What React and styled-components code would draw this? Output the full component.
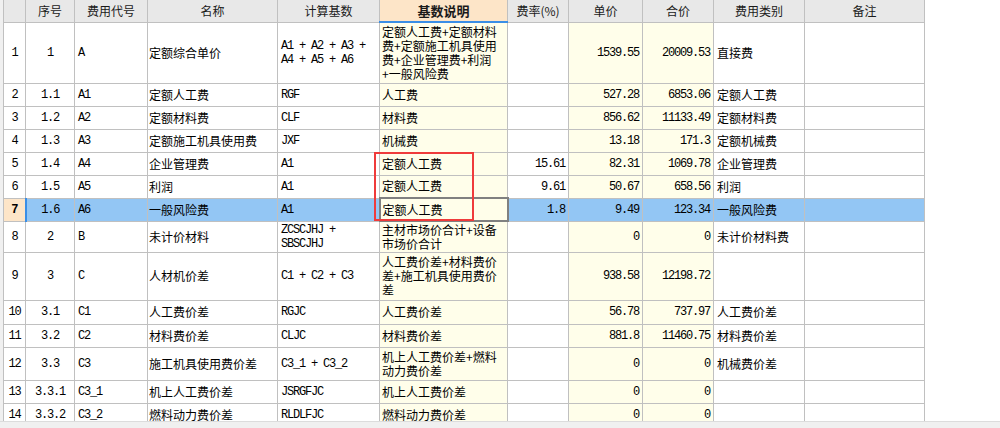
import React from "react";
import styled, { createGlobalStyle, css } from "styled-components";

const GlobalStyle = createGlobalStyle`
  html, body {
    margin: 0;
    padding: 0;
    background: #ffffff;
  }
  body {
    font-family: "Noto Sans CJK SC", "Noto Sans", sans-serif;
  }
`;

const IVORY = "#fffeea";
const SELECTED = "#93c6f4";
const PEACH = "#fde5c8";
const ACCENT = "#3a8ee6";

// column setup: width, alignment, monospace text, ivory background
const columns = [
  { key: "num", title: "", width: 22, align: "center", mono: true },
  { key: "seq", title: "序号", width: 49, align: "center", mono: true },
  { key: "code", title: "费用代号", width: 73, mono: true },
  { key: "name", title: "名称", width: 130, pad: 1 },
  { key: "base", title: "计算基数", width: 102, mono: true },
  { key: "desc", title: "基数说明", width: 128, ivory: true, pad: 2, active: true },
  { key: "rate", title: "费率(%)", width: 61, align: "right", mono: true },
  { key: "price", title: "单价", width: 74, align: "right", mono: true, ivory: true },
  { key: "total", title: "合价", width: 71, align: "right", mono: true, ivory: true },
  { key: "kind", title: "费用类别", width: 91 },
  { key: "note", title: "备注", width: 120 },
];

const rows = [
  { h: 61, num: 1, seq: "1", code: "A", name: "定额综合单价", base: "A1 + A2 + A3 +\nA4 + A5 + A6", desc: "定额人工费+定额材料\n费+定额施工机具使用\n费+企业管理费+利润\n+一般风险费", price: "1539.55", total: "20009.53", kind: "直接费" },
  { h: 23, num: 2, seq: "1.1", code: "A1", name: "定额人工费", base: "RGF", desc: "人工费", price: "527.28", total: "6853.06", kind: "定额人工费" },
  { h: 23, num: 3, seq: "1.2", code: "A2", name: "定额材料费", base: "CLF", desc: "材料费", price: "856.62", total: "11133.49", kind: "定额材料费" },
  { h: 23, num: 4, seq: "1.3", code: "A3", name: "定额施工机具使用费", base: "JXF", desc: "机械费", price: "13.18", total: "171.3", kind: "定额机械费" },
  { h: 23, num: 5, seq: "1.4", code: "A4", name: "企业管理费", base: "A1", desc: "定额人工费", rate: "15.61", price: "82.31", total: "1069.78", kind: "企业管理费" },
  { h: 23, num: 6, seq: "1.5", code: "A5", name: "利润", base: "A1", desc: "定额人工费", rate: "9.61", price: "50.67", total: "658.56", kind: "利润" },
  { h: 23, num: 7, seq: "1.6", code: "A6", name: "一般风险费", base: "A1", desc: "定额人工费", rate: "1.8", price: "9.49", total: "123.34", kind: "一般风险费", selected: true },
  { h: 31, num: 8, seq: "2", code: "B", name: "未计价材料", base: "ZCSCJHJ +\nSBSCJHJ", desc: "主材市场价合计+设备\n市场价合计", price: "0", total: "0", kind: "未计价材料费" },
  { h: 48, num: 9, seq: "3", code: "C", name: "人材机价差", base: "C1 + C2 + C3", desc: "人工费价差+材料费价\n差+施工机具使用费价\n差", price: "938.58", total: "12198.72" },
  { h: 24, num: 10, seq: "3.1", code: "C1", name: "人工费价差", base: "RGJC", desc: "人工费价差", price: "56.78", total: "737.97", kind: "人工费价差" },
  { h: 23, num: 11, seq: "3.2", code: "C2", name: "材料费价差", base: "CLJC", desc: "材料费价差", price: "881.8", total: "11460.75", kind: "材料费价差" },
  { h: 33, num: 12, seq: "3.3", code: "C3", name: "施工机具使用费价差", base: "C3_1 + C3_2", desc: "机上人工费价差+燃料\n动力费价差", price: "0", total: "0", kind: "机械费价差" },
  { h: 23, num: 13, seq: "3.3.1", code: "C3_1", name: "机上人工费价差", base: "JSRGFJC", desc: "机上人工费价差", price: "0", total: "0" },
  { h: 23, num: 14, seq: "3.3.2", code: "C3_2", name: "燃料动力费价差", base: "RLDLFJC", desc: "燃料动力费价差", price: "0", total: "0" },
];

const Page = styled.div`
  position: relative;
  width: 1000px;
  height: 428px;
  overflow: hidden;
  display: flex;
  flex-direction: column;
  background: #ffffff;
`;

const GridArea = styled.div`
  height: 421px;
  flex: none;
  overflow: hidden;
  border-left: 3px solid #f0f0f0;
`;

const HScroll = styled.div`
  flex: 1;
  background: #f0f0f0;
  border-top: 1px solid #dcdcdc;
`;

const Table = styled.table`
  border-collapse: collapse;
  table-layout: fixed;
  width: 921px;
  color: #000000;
`;

const Th = styled.th`
  height: 21px;
  padding: 0;
  border: 1px solid #c0c0c0;
  border-top: none;
  background: #e8e8e8;
  color: #1a1a1a;
  font-family: "Noto Sans CJK SC", sans-serif;
  font-size: 12px;
  font-weight: 400;
  text-align: center;
  white-space: nowrap;
  ${(p) =>
    p.$active &&
    css`
      background: ${PEACH};
      font-weight: 700;
      font-size: 13px;
      border-bottom: 2px solid ${ACCENT};
    `}
`;

const Td = styled.td`
  border: 1px solid #c0c0c0;
  padding: 0 3px 0 ${(p) => (p.$pad != null ? p.$pad : 3)}px;
  vertical-align: middle;
  line-height: 14px;
  white-space: pre;
  overflow: hidden;
  text-align: ${(p) => p.$align || "left"};
  background: ${(p) => p.$bg};
  font-family: ${(p) =>
    p.$mono ? '"Liberation Mono", "DejaVu Sans Mono", monospace' : '"Noto Sans CJK SC", sans-serif'};
  font-size: 12px;
  letter-spacing: ${(p) => (p.$mono ? "-1.2px" : "0")};
  ${(p) =>
    p.$focus &&
    css`
      border: 2px solid #808080;
    `}
  ${(p) =>
    p.$rowHead &&
    css`
      padding: 0;
      font-weight: 700;
      background: ${PEACH};
      border-right: 2px solid ${ACCENT};
    `}
`;

const Marker = styled.div`
  position: absolute;
  left: 374px;
  top: 152px;
  width: 100px;
  height: 69px;
  box-sizing: border-box;
  border: 2px solid #ef3b3b;
  pointer-events: none;
`;

function cellBg(col, row) {
  if (row.selected && col.key !== "desc" && col.key !== "num") return SELECTED;
  if (col.ivory) return IVORY;
  return "#ffffff";
}

export default function App() {
  return (
    <Page>
      <GlobalStyle />
      <GridArea>
        <Table>
          <colgroup>
            {columns.map((c) => (
              <col key={c.key} style={{ width: c.width }} />
            ))}
          </colgroup>
          <thead>
            <tr>
              {columns.map((c) => (
                <Th key={c.key} $active={c.active}>
                  {c.title}
                </Th>
              ))}
            </tr>
          </thead>
          <tbody>
            {rows.map((r) => (
              <tr key={r.num} style={{ height: r.h }}>
                {columns.map((c) => (
                  <Td
                    key={c.key}
                    $align={c.align}
                    $mono={c.mono}
                    $pad={c.pad}
                    $bg={cellBg(c, r)}
                    $focus={r.selected && c.key === "desc"}
                    $rowHead={r.selected && c.key === "num"}
                  >
                    {r[c.key]}
                  </Td>
                ))}
              </tr>
            ))}
          </tbody>
        </Table>
      </GridArea>
      <HScroll />
      <Marker />
    </Page>
  );
}
